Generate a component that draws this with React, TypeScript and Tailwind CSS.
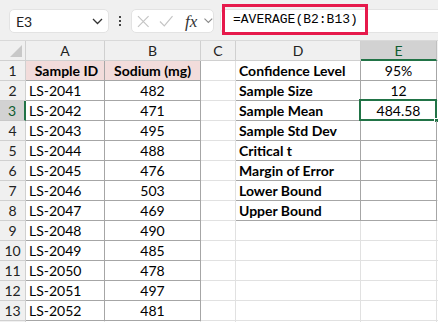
import React from "react";

const font = { fontFamily: "Lato, 'Noto Sans', sans-serif" };

const ids = [
  ["LS-2041", "482"],
  ["LS-2042", "471"],
  ["LS-2043", "495"],
  ["LS-2044", "488"],
  ["LS-2045", "476"],
  ["LS-2046", "503"],
  ["LS-2047", "469"],
  ["LS-2048", "490"],
  ["LS-2049", "485"],
  ["LS-2050", "478"],
  ["LS-2051", "497"],
  ["LS-2052", "481"],
];

const stats: [string, string][] = [
  ["Confidence Level", "95%"],
  ["Sample Size", "12"],
  ["Sample Mean", "484.58"],
  ["Sample Std Dev", ""],
  ["Critical t", ""],
  ["Margin of Error", ""],
  ["Lower Bound", ""],
  ["Upper Bound", ""],
];

function Row({ n }: { n: number }) {
  const sel = n === 3;
  const dataA = n === 1 ? "Sample ID" : n <= 13 ? ids[n - 2][0] : "";
  const dataB = n === 1 ? "Sodium (mg)" : n <= 13 ? ids[n - 2][1] : "";
  const st = n <= 8 ? stats[n - 1] : null;
  const hdr = n === 1;
  const abBorder = n <= 13;
  return (
    <div className="flex h-[20px]">
      <div
        className={`w-[26px] shrink-0 flex items-center justify-center border-b border-r text-[14px] ${
          sel
            ? "bg-[#d2d2d2] border-r-2 border-r-[#217346] border-b-[#c8c8c8] text-[#0e5c2f]"
            : "bg-[#f0f0f0] border-[#d0d0d0] text-[#222]"
        }`}
      >
        {n <= 13 ? n : ""}
      </div>
      <div
        className={`w-[79px] shrink-0 flex items-center pl-[3px] border-b border-r ${
          abBorder ? "border-[#a6a6a6]" : "border-[#e1e1e1]"
        } ${hdr ? "bg-[#f2dcdb] font-bold justify-center pl-0" : ""}`}
      >
        {dataA}
      </div>
      <div
        className={`w-[96px] shrink-0 flex items-center justify-center border-b border-r ${
          abBorder ? "border-[#a6a6a6]" : "border-[#e1e1e1]"
        } ${hdr ? "bg-[#f2dcdb] font-bold" : ""}`}
      >
        {dataB}
      </div>
      <div className="w-[35px] shrink-0 border-b border-r border-[#e1e1e1]" />
      <div
        className={`w-[125px] shrink-0 flex items-center pl-[3px] font-bold border-b border-r ${
          st ? "border-[#a6a6a6]" : "border-[#e1e1e1]"
        }`}
      >
        {st ? st[0] : ""}
      </div>
      <div
        className={`relative w-[76px] shrink-0 flex items-center justify-center border-b border-r ${
          st ? "border-[#a6a6a6]" : "border-[#e1e1e1]"
        }`}
      >
        {st ? st[1] : ""}
        {sel && (
          <>
            <div className="absolute left-[-2px] top-[-2px] right-[-1px] bottom-[-1px] border-2 border-[#217346]" />
            <div className="absolute right-[-3px] bottom-[-3px] w-[5px] h-[5px] bg-[#217346] border border-white" />
          </>
        )}
      </div>
      <div className="flex-1 border-b border-[#e1e1e1]" />
    </div>
  );
}

export default function App() {
  const rows = Array.from({ length: 14 }, (_, i) => i + 1);
  return (
    <div
      className="w-[438px] h-[322px] overflow-hidden bg-white text-[14px] text-black"
      style={font}
    >
      {/* toolbar */}
      <div className="h-[41px] bg-[#f0f0f0] border-b border-[#d9d9d9] flex items-start pt-[9px] relative">
        <div className="ml-[9px] w-[100px] h-[24px] bg-white rounded-[5px] border border-[#e3e3e3] flex items-center justify-between pl-[6px] pr-[5px]">
          <span className="text-[14px] text-[#222]">E3</span>
          <svg width="11" height="7" viewBox="0 0 11 7">
            <path d="M1 1l4.5 4.5L10 1" stroke="#333" strokeWidth="1.3" fill="none" />
          </svg>
        </div>
        <div className="w-[22px] h-[24px] flex flex-col items-center justify-center gap-[2px]">
          <div className="w-[2px] h-[2px] bg-[#444]" />
          <div className="w-[2px] h-[2px] bg-[#444]" />
          <div className="w-[2px] h-[2px] bg-[#444]" />
        </div>
        <div className="w-[83px] h-[24px] bg-white rounded-[5px] border border-[#e3e3e3] flex items-center pl-[5px]">
          <svg width="13" height="13" viewBox="0 0 13 13">
            <path d="M1 1l11 11M12 1L1 12" stroke="#c4c4c4" strokeWidth="1.2" />
          </svg>
          <svg className="ml-[9px]" width="15" height="12" viewBox="0 0 15 12">
            <path d="M1 6.5l4.5 4.5L14 1" stroke="#c4c4c4" strokeWidth="1.2" fill="none" />
          </svg>
          <span
            className="italic text-[17px] text-[#333] ml-[12px] leading-none"
            style={{ fontFamily: "'Liberation Serif', serif" }}
          >
            fx
          </span>
          <svg className="ml-[7px]" width="9" height="6" viewBox="0 0 9 6">
            <path d="M0.5 0.5l4 4 4-4" stroke="#888" strokeWidth="1.1" fill="none" />
          </svg>
        </div>
        <div className="ml-[6px] flex-1 h-[24px] bg-white rounded-l-[5px] border border-r-0 border-[#e3e3e3]" />
        <div
          className="absolute left-[222px] top-[4px] w-[146px] h-[31px] border-[3px] border-[#e6194b] flex items-center pl-[8px] text-[13px] text-black"
          style={{ fontFamily: "'Liberation Mono', monospace" }}
        >
          =AVERAGE(B2:B13)
        </div>
      </div>
      {/* column headers */}
      <div className="flex h-[20px] text-[#222]">
        <div className="w-[26px] shrink-0 bg-[#f0f0f0] border-b border-r border-[#d0d0d0] relative">
          <svg className="absolute right-[3px] bottom-[3px]" width="12" height="12" viewBox="0 0 12 12">
            <path d="M12 0L12 12L0 12Z" fill="#c8c8c8" />
          </svg>
        </div>
        {[
          ["A", "w-[79px]"],
          ["B", "w-[96px]"],
          ["C", "w-[35px]"],
          ["D", "w-[125px]"],
        ].map(([l, w]) => (
          <div
            key={l}
            className={`${w} shrink-0 bg-[#f0f0f0] border-b border-r border-[#d0d0d0] flex items-center justify-center`}
          >
            {l}
          </div>
        ))}
        <div className="w-[76px] shrink-0 bg-[#d2d2d2] border-b-2 border-b-[#217346] border-r border-r-[#c0c0c0] flex items-center justify-center text-[#0e5c2f]">
          E
        </div>
        <div className="flex-1 bg-[#f0f0f0] border-b border-[#d0d0d0]" />
      </div>
      {rows.map((n) => (
        <Row key={n} n={n} />
      ))}
    </div>
  );
}
